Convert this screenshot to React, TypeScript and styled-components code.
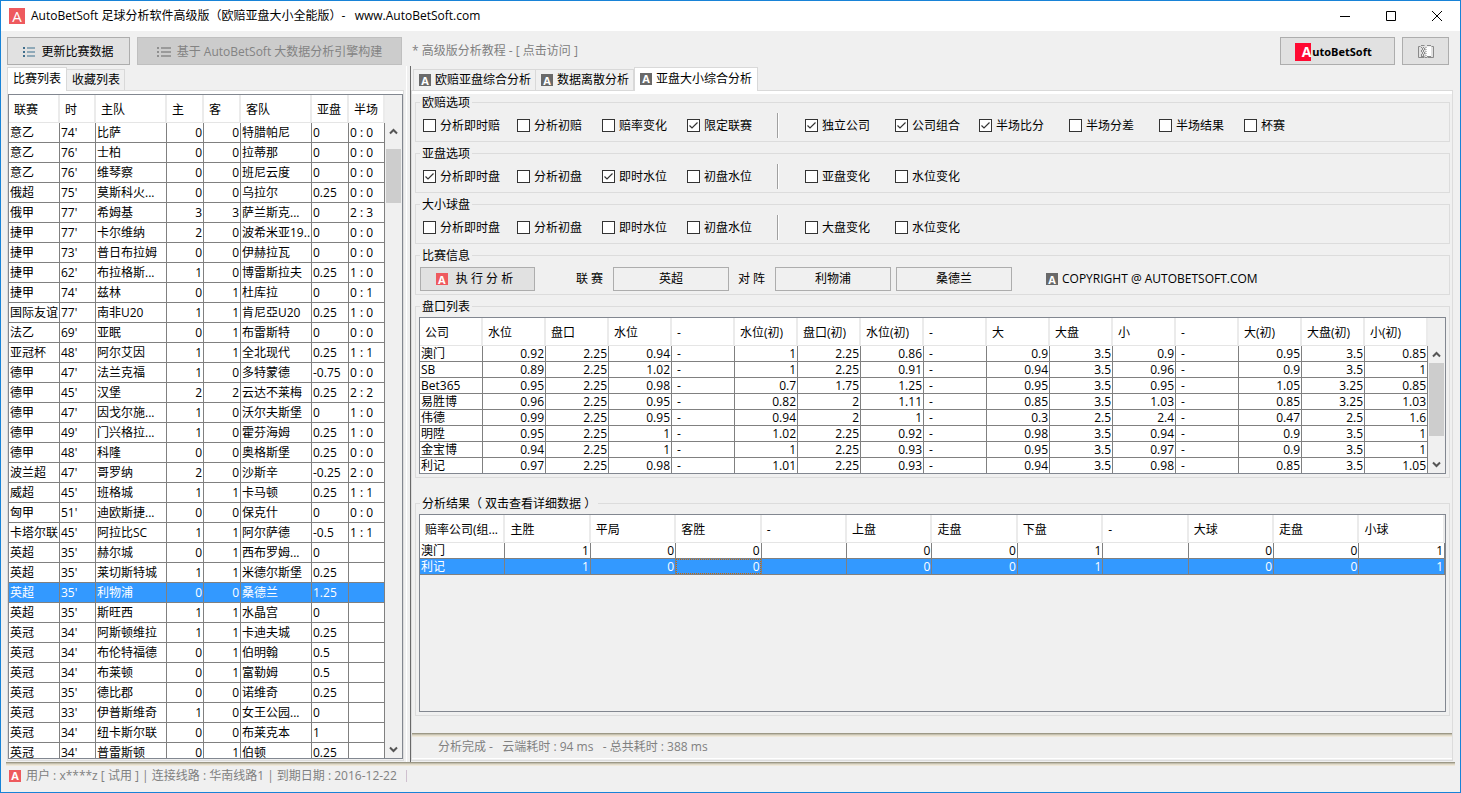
import React from 'react';
import styled, { createGlobalStyle, css } from 'styled-components';

const Global = createGlobalStyle`
  *, *::before, *::after { box-sizing: border-box; }
  body {
    margin: 0;
    background: #f0f0f0;
    color: #000;
    font: 12px/16px "Open Sans", "Noto Sans CJK SC", sans-serif;
  }
  button, input { font: inherit; color: inherit; }
`;

/* Sunken rule that fades from olive grey into the window colour. */
const fadingRule = css`
  background: linear-gradient(#9c9886 0 1px, #c4bfae 1px 2px, #e0dac9 2px 3px, #efe8da 3px 4px, transparent 4px);
`;

/* ---------- window frame ---------- */

const Window = styled.div`
  display: flex;
  flex-direction: column;
  height: 100vh;
  overflow: hidden;
  border: 1px solid #1883d7;
  background: #f0f0f0;
`;

const TitleBar = styled.header`
  display: flex;
  align-items: center;
  flex: none;
  height: 30px;
  padding-left: 8px;
  gap: 6px;
  background: #fff;
`;

const Title = styled.h1`
  flex: 1;
  margin: 0;
  font-size: 12px;
  font-weight: 400;
  white-space: pre;
`;

const WindowButtons = styled.div`
  display: flex;
`;

const WindowButton = styled.button`
  display: grid;
  place-items: center;
  width: 46px;
  height: 30px;
  padding: 0;
  border: 0;
  background: none;
`;

const Mark = styled.span<{ $size?: number; $tone?: 'red' | 'grey' }>`
  display: inline-flex;
  align-items: center;
  justify-content: center;
  flex: none;
  width: ${(p) => p.$size ?? 12}px;
  height: ${(p) => p.$size ?? 12}px;
  background: ${(p) => (p.$tone === 'grey' ? '#696969' : '#ee5a5e')};
  color: #fff;
  font-family: "Open Sans", sans-serif;
  font-size: ${(p) => (p.$size ?? 12) - 1}px;
  font-weight: ${(p) => (p.$size ? 400 : 700)};
  line-height: 1;
`;

/* ---------- toolbar ---------- */

const Toolbar = styled.div`
  display: flex;
  align-items: flex-start;
  flex: none;
  height: 35px;
  padding: 6px 11px 0 6px;
  gap: 7px;
`;

const ToolButton = styled.button<{ $width: number }>`
  display: flex;
  align-items: center;
  justify-content: center;
  flex: none;
  gap: 6px;
  width: ${(p) => p.$width}px;
  height: 28px;
  padding: 1px 0 0;
  border: 1px solid #adadad;
  background: #e1e1e1;
  white-space: nowrap;
  &:disabled {
    border-color: #bfbfbf;
    background: #ccc;
    color: #838383;
  }
`;

const Guide = styled.a`
  flex: 1;
  padding-left: 3px;
  color: #808080;
  line-height: 28px;
  text-decoration: none;
  white-space: pre;
`;

const Brand = styled.span`
  display: flex;
  align-items: center;
  padding-right: 8px;
  gap: 1px;
  font-size: 11px;
  font-weight: 700;
`;

const BrandInitial = styled.span`
  width: 16px;
  height: 18px;
  background: #ff0a32;
  color: #fff;
  font-size: 14px;
  line-height: 17px;
  text-align: right;
`;

/* ---------- panes and tabs ---------- */

const Main = styled.main`
  display: flex;
  flex: 1;
  min-height: 0;
`;

const LeftPane = styled.section`
  display: flex;
  flex-direction: column;
  flex: none;
  width: 406px;
  padding: 0 2px 1px 6px;
  border-right: 1px solid #fff;
`;

const RightPane = styled.section`
  display: flex;
  flex-direction: column;
  flex: 1;
  min-width: 0;
  margin-left: 3px;
  padding: 0 7px 1px 0;
  border-left: 1px solid #696969;
`;

const TabStrip = styled.div<{ $inset?: boolean }>`
  display: flex;
  align-items: flex-end;
  flex: none;
  height: 24px;
  padding-left: ${(p) => (p.$inset ? 2 : 0)}px;
`;

const Tab = styled.button<{ $active?: boolean }>`
  display: flex;
  align-items: center;
  gap: 4px;
  height: 21px;
  padding: 0 4px 0 5px;
  border: 1px solid #d9d9d9;
  border-width: 1px 1px 0 0;
  background: #f0f0f0;
  white-space: nowrap;
  &:first-child { border-left-width: 1px; }
  ${(p) =>
    p.$active &&
    css`
      height: 24px;
      margin-bottom: -1px;
      padding: 0 5px 2px;
      border-left-width: 1px;
      background: #fff;
      z-index: 1;
    `}
`;

const TabPanel = styled.div`
  display: flex;
  flex-direction: column;
  flex: 1;
  min-height: 0;
  padding-bottom: 1px;
  border: 1px solid #dcdcdc;
  border-top-color: #d9d9d9;
  &::before {
    content: "";
    flex: none;
    height: 3px;
    background: #fff;
  }
`;

/* ---------- group boxes ---------- */

const Groups = styled.div`
  display: flex;
  flex-direction: column;
  flex: 1;
  min-height: 0;
  gap: 3px;
  padding: 0 2px 17px 3px;
`;

const Group = styled.fieldset<{ $top: number; $fill?: boolean; $gap?: number }>`
  display: flex;
  align-items: stretch;
  flex: ${(p) => (p.$fill ? '1 1 0' : 'none')};
  min-width: 0;
  min-height: 0;
  margin: ${(p) => p.$gap ?? 0}px 0 0;
  padding: ${(p) => p.$top}px 3px 3px;
  border: 1px solid #dcdcdc;
`;

const Legend = styled.legend`
  margin-left: 1px;
  padding: 2px 2px 0;
  line-height: 14px;
  white-space: pre;
`;

const OptionGrid = styled.div`
  display: grid;
  grid-template-columns: 94px 85px 85px 90px 28px 90px 84px 90px 90px 85px auto;
  align-items: center;
  height: 25px;
  padding-left: 4px;
`;

const Divider = styled.span`
  width: 2px;
  height: 25px;
  border-left: 1px solid #a0a0a0;
  border-right: 1px solid #fff;
`;

const CheckLabel = styled.label`
  display: flex;
  align-items: center;
  gap: 4px;
  white-space: nowrap;
`;

const CheckBox = styled.span`
  display: grid;
  & > * { grid-area: 1 / 1; }
  svg { pointer-events: none; }
`;

const CheckInput = styled.input`
  appearance: none;
  width: 13px;
  height: 13px;
  margin: 0;
  border: 1px solid #333;
  background: #fff;
  & + svg { visibility: hidden; }
  &:checked + svg { visibility: visible; }
`;

const InfoButton = styled.button<{ $filled?: boolean }>`
  display: flex;
  align-items: center;
  justify-content: center;
  gap: 8px;
  width: ${(p) => (p.$filled ? 115 : 116)}px;
  height: 24px;
  padding: ${(p) => (p.$filled ? '0 6px 0 0' : '0')};
  border: 1px solid #adadad;
  background: ${(p) => (p.$filled ? '#e1e1e1' : '#f0f0f0')};
  white-space: pre;
`;

const InfoRow = styled.div`
  display: flex;
  align-items: center;
  height: 24px;
  padding-left: 1px;
`;

const InfoLabel = styled.span<{ $before: number }>`
  width: ${(p) => p.$before + 37}px;
  padding-left: ${(p) => p.$before}px;
  white-space: pre;
`;

const InfoPair = styled.div`
  display: flex;
  gap: 5px;
`;

const Copyright = styled.span`
  display: flex;
  align-items: center;
  gap: 4px;
  padding-left: 34px;
  white-space: pre;
`;

/* ---------- data grids ---------- */

const GridFrame = styled.div`
  display: flex;
  align-items: flex-start;
  flex: 1;
  min-width: 0;
  min-height: 0;
  overflow: hidden;
  border: 1px solid #828790;
`;

const OddsFrame = styled(GridFrame)`
  height: 157px;
`;

const Table = styled.table<{ $row: number; $width?: string }>`
  flex: ${(p) => (p.$width ? 'none' : '1')};
  width: ${(p) => p.$width ?? '100%'};
  min-width: 0;
  table-layout: fixed;
  border-collapse: separate;
  border-spacing: 0;
  background: #fff;
  th {
    height: 28px;
    padding: 2px 0 0 5px;
    border-right: 2px solid #ebebeb;
    border-bottom: 1px solid #e5e5e5;
    font-weight: 400;
    text-align: left;
  }
  td {
    height: ${(p) => p.$row}px;
    padding: 0 1px;
    border-right: 1px solid #808080;
    border-bottom: 1px solid #808080;
    line-height: ${(p) => p.$row - 1}px;
  }
  th, td {
    overflow: hidden;
    white-space: pre;
  }
`;

const Row = styled.tr<{ $selected?: boolean }>`
  ${(p) =>
    p.$selected &&
    css`
      background: #39f;
      color: #fff;
    `}
`;

const Cell = styled.td<{ $right?: boolean; $inset?: boolean }>`
  text-align: ${(p) => (p.$right ? 'right' : 'left')};
  ${(p) => p.$inset && 'text-indent: 4px;'}
`;

const FocusRing = styled.div`
  height: 15px;
  margin: 0 -1px;
  border: 1px dotted #c60;
  line-height: 13px;
`;

const ScrollTrack = styled.div`
  display: flex;
  flex-direction: column;
  align-self: stretch;
  align-items: center;
  flex: none;
  width: 17px;
  padding-top: 28px;
  background: #f0f0f0;
`;

const ScrollArrow = styled.button`
  display: grid;
  place-items: center;
  flex: none;
  width: 17px;
  height: 17px;
  padding: 0;
  border: 0;
  background: none;
`;

const ScrollSpace = styled.div<{ $before: number }>`
  flex: 1;
  width: 15px;
  padding-top: ${(p) => p.$before}px;
`;

const ScrollThumb = styled.div<{ $length: number }>`
  height: ${(p) => p.$length}px;
  background: #cdcdcd;
`;

/* ---------- status lines ---------- */

const ResultStatus = styled.div`
  flex: none;
  height: 26px;
  padding: 6px 26px 0;
  border-bottom: 1px solid #fff;
  color: #808080;
  white-space: pre;
  ${fadingRule}
`;

const Footer = styled.footer`
  display: flex;
  align-items: flex-start;
  flex: none;
  height: 30px;
  margin: 0 5px;
  padding: 5px 3px 0;
  gap: 5px;
  color: #808080;
  white-space: pre;
  ${fadingRule}
`;

const FooterText = styled.span`
  display: flex;
  align-items: center;
  gap: 5px;
  height: 17px;
`;

const FooterDivider = styled.span`
  width: 1px;
  height: 12px;
  margin: 3px 0 0 4px;
  background: #cfc0cf;
`;

/* ---------- small drawings ---------- */

const ListIcon = ({ muted, size = 12 }: { muted?: boolean; size?: number }) => (
  <svg width={size} height="12" viewBox={`0 0 ${size} 12`} aria-hidden="true" shapeRendering="crispEdges">
    {[1, 5, 9].map((y) => (
      <g key={y}>
        <rect x="0" y={y} width="2" height="2" fill={muted ? '#8f8f8f' : '#3f6e8c'} />
        <rect x="4" y={y} width={size - 4} height="2" fill={muted ? '#9a9a9a' : '#8fa9b8'} />
      </g>
    ))}
  </svg>
);

const BookIcon = () => (
  <svg width="16" height="14" viewBox="0 0 16 14" fill="none" stroke="#8a8a8a" aria-hidden="true">
    <path d="M8 2.5L9 1.5H13V11.5H8Z" fill="#fff" stroke="none" />
    <path d="M2.5 1.5H0.5V12.5H6.5M13.5 1.5H15.5V12.5H9.5" />
    <path d="M3 0.5H6.5M9 0.5H13M3 11.5H6.5M9 11.5H13M7 12.5H9" />
    <path d="M3 2.5H7M4 4.5H8M3 6.5H7M4 8.5H8M3 10.5H7M4 3.5H8M3 5.5H7M4 7.5H8M3 9.5H7M8 2V12" strokeDasharray="1 1" />
  </svg>
);

const Chevron = ({ down }: { down?: boolean }) => (
  <svg width="9" height="7" viewBox="0 0 9 7" fill="none" stroke="#555" strokeWidth="2" aria-hidden="true">
    <path d={down ? 'M1 1.5L4.5 5L8 1.5' : 'M1 5.5L4.5 2L8 5.5'} />
  </svg>
);

const Scrollbar = ({ before, length }: { before: number; length: number }) => (
  <ScrollTrack>
    <ScrollArrow type="button" aria-label="向上滚动"><Chevron /></ScrollArrow>
    <ScrollSpace $before={before}><ScrollThumb $length={length} /></ScrollSpace>
    <ScrollArrow type="button" aria-label="向下滚动"><Chevron down /></ScrollArrow>
  </ScrollTrack>
);

/* ---------- data ---------- */

const matchColumns: [string, number][] = [
  ['联赛', 51], ['时', 36], ['主队', 71], ['主', 37], ['客', 37], ['客队', 71], ['亚盘', 37], ['半场', 36],
];

const matches = `意乙|74'|比萨|0|0|特腊帕尼|0|0 : 0
意乙|76'|士柏|0|0|拉蒂那|0|0 : 0
意乙|76'|维琴察|0|0|班尼云度|0|0 : 0
俄超|75'|莫斯科火...|0|0|乌拉尔|0.25|0 : 0
俄甲|77'|希姆基|3|3|萨兰斯克...|0|2 : 3
捷甲|77'|卡尔维纳|2|0|波希米亚19..|0|0 : 0
捷甲|73'|普日布拉姆|0|0|伊赫拉瓦|0|0 : 0
捷甲|62'|布拉格斯...|1|0|博雷斯拉夫|0.25|1 : 0
捷甲|74'|兹林|0|1|杜库拉|0|0 : 1
国际友谊|77'|南非U20|1|1|肯尼亞U20|0.25|1 : 0
法乙|69'|亚眠|0|1|布雷斯特|0|0 : 0
亚冠杯|48'|阿尔艾因|1|1|全北现代|0.25|1 : 1
德甲|47'|法兰克福|1|0|多特蒙德|-0.75|0 : 0
德甲|45'|汉堡|2|2|云达不莱梅|0.25|2 : 2
德甲|47'|因戈尔施...|1|0|沃尔夫斯堡|0|1 : 0
德甲|49'|门兴格拉...|1|0|霍芬海姆|0.25|1 : 0
德甲|48'|科隆|0|0|奥格斯堡|0.25|0 : 0
波兰超|47'|哥罗纳|2|0|沙斯辛|-0.25|2 : 0
威超|45'|班格城|1|1|卡马顿|0.25|1 : 1
匈甲|51'|迪欧斯捷...|0|0|保克什|0|0 : 0
卡塔尔联|45'|阿拉比SC|1|1|阿尔萨德|-0.5|1 : 1
英超|35'|赫尔城|0|1|西布罗姆...|0|
英超|35'|莱切斯特城|1|1|米德尔斯堡|0.25|
英超|35'|利物浦|0|0|桑德兰|1.25|
英超|35'|斯旺西|1|1|水晶宫|0|
英冠|34'|阿斯顿维拉|1|1|卡迪夫城|0.25|
英冠|34'|布伦特福德|0|1|伯明翰|0.5|
英冠|34'|布莱顿|0|1|富勒姆|0.5|
英冠|35'|德比郡|0|0|诺维奇|0.25|
英冠|33'|伊普斯维奇|1|0|女王公园...|0|
英冠|34'|纽卡斯尔联|0|0|布莱克本|1|
英冠|34'|普雷斯顿|0|1|伯顿|0.25|`.split('\n').map((line) => line.split('|'));

const oddsColumns = [
  '公司', '水位', '盘口', '水位', '-', '水位(初)', '盘口(初)', '水位(初)', '-',
  '大', '大盘', '小', '-', '大(初)', '大盘(初)', '小(初)',
];

const odds = `澳门|0.92|2.25|0.94|-|1|2.25|0.86|-|0.9|3.5|0.9|-|0.95|3.5|0.85
SB|0.89|2.25|1.02|-|1|2.25|0.91|-|0.94|3.5|0.96|-|0.9|3.5|1
Bet365|0.95|2.25|0.98|-|0.7|1.75|1.25|-|0.95|3.5|0.95|-|1.05|3.25|0.85
易胜博|0.96|2.25|0.95|-|0.82|2|1.11|-|0.85|3.5|1.03|-|0.85|3.25|1.03
伟德|0.99|2.25|0.95|-|0.94|2|1|-|0.3|2.5|2.4|-|0.47|2.5|1.6
明陞|0.95|2.25|1|-|1.02|2.25|0.92|-|0.98|3.5|0.94|-|0.9|3.5|1
金宝博|0.94|2.25|1|-|1|2.25|0.93|-|0.95|3.5|0.97|-|0.9|3.5|1
利记|0.97|2.25|0.98|-|1.01|2.25|0.93|-|0.94|3.5|0.98|-|0.85|3.5|1.05`
  .split('\n').map((line) => line.split('|'));

const resultColumns = [
  '赔率公司(组...', '主胜', '平局', '客胜', '-', '上盘', '走盘', '下盘', '-', '大球', '走盘', '小球',
];

const results = [
  ['澳门', '1', '0', '0', '', '0', '0', '1', '', '0', '0', '1'],
  ['利记', '1', '0', '0', '', '0', '0', '1', '', '0', '0', '1'],
];

/* A null entry is the divider; a leading "+" marks a ticked option. */
const optionGroups: { title: string; options: (string | null)[] }[] = [
  {
    title: '欧赔选项',
    options: ['分析即时赔', '分析初赔', '赔率变化', '+限定联赛', null, '+独立公司', '+公司组合', '+半场比分', '半场分差', '半场结果', '杯赛'],
  },
  {
    title: '亚盘选项',
    options: ['+分析即时盘', '分析初盘', '+即时水位', '初盘水位', null, '亚盘变化', '水位变化'],
  },
  {
    title: '大小球盘',
    options: ['分析即时盘', '分析初盘', '即时水位', '初盘水位', null, '大盘变化', '水位变化'],
  },
];

const Option = ({ text }: { text: string }) => (
  <CheckLabel>
    <CheckBox>
      <CheckInput type="checkbox" defaultChecked={text.startsWith('+')} />
      <svg width="13" height="13" viewBox="0 0 13 13" fill="none" stroke="#333" strokeWidth="1.2" aria-hidden="true">
        <path d="M2.5 6.5L5 9L10.5 3.5" />
      </svg>
    </CheckBox>
    {text.replace('+', '')}
  </CheckLabel>
);

export default function App() {
  return (
    <>
      <Global />
      <Window>
        <TitleBar>
          <Mark $size={16}>A</Mark>
          <Title>{'AutoBetSoft 足球分析软件高级版（欧赔亚盘大小全能版）-   www.AutoBetSoft.com'}</Title>
          <WindowButtons>
            <WindowButton type="button" aria-label="最小化">
              <svg width="10" height="10" viewBox="0 0 10 10" stroke="#000"><path d="M0 5.5H10" /></svg>
            </WindowButton>
            <WindowButton type="button" aria-label="最大化">
              <svg width="10" height="10" viewBox="0 0 10 10" stroke="#000" fill="none"><path d="M0.5 0.5H9.5V9.5H0.5Z" /></svg>
            </WindowButton>
            <WindowButton type="button" aria-label="关闭">
              <svg width="10" height="10" viewBox="0 0 10 10" stroke="#000"><path d="M0 0L10 10M10 0L0 10" /></svg>
            </WindowButton>
          </WindowButtons>
        </TitleBar>

        <Toolbar>
          <ToolButton type="button" $width={123}><ListIcon />更新比赛数据</ToolButton>
          <ToolButton type="button" $width={265} disabled>
            <ListIcon muted size={14} />基于 AutoBetSoft 大数据分析引擎构建
          </ToolButton>
          <Guide href="#guide">{'* 高级版分析教程 - [ 点击访问 ]'}</Guide>
          <ToolButton type="button" $width={115}>
            <Brand><BrandInitial>A</BrandInitial>utoBetSoft</Brand>
          </ToolButton>
          <ToolButton type="button" $width={47} aria-label="帮助"><BookIcon /></ToolButton>
        </Toolbar>

        <Main>
          <LeftPane>
            <TabStrip role="tablist">
              <Tab type="button" role="tab" aria-selected $active>比赛列表</Tab>
              <Tab type="button" role="tab">收藏列表</Tab>
            </TabStrip>
            <TabPanel>
              <GridFrame>
                <Table $row={20} $width="376px">
                  <colgroup>
                    {matchColumns.map(([name, width]) => <col key={name} width={width} />)}
                  </colgroup>
                  <thead>
                    <tr>{matchColumns.map(([name]) => <th key={name}>{name}</th>)}</tr>
                  </thead>
                  <tbody>
                    {matches.map((match) => (
                      <Row key={match[2]} $selected={match[2] === '利物浦'}>
                        {match.map((value, i) => (
                          <Cell key={i} $right={i === 3 || i === 4}>{value}</Cell>
                        ))}
                      </Row>
                    ))}
                  </tbody>
                </Table>
                <Scrollbar before={9} length={54} />
              </GridFrame>
            </TabPanel>
          </LeftPane>

          <RightPane>
            <TabStrip role="tablist" $inset>
              <Tab type="button" role="tab"><Mark $tone="grey">A</Mark>欧赔亚盘综合分析</Tab>
              <Tab type="button" role="tab"><Mark $tone="grey">A</Mark>数据离散分析</Tab>
              <Tab type="button" role="tab" aria-selected $active><Mark $tone="grey">A</Mark>亚盘大小综合分析</Tab>
            </TabStrip>
            <TabPanel>
              <Groups>
                {optionGroups.map(({ title, options }) => (
                  <Group key={title} $top={3}>
                    <Legend>{title}</Legend>
                    <OptionGrid>
                      {options.map((text, i) => (text ? <Option key={i} text={text} /> : <Divider key={i} />))}
                    </OptionGrid>
                  </Group>
                ))}

                <Group $top={4}>
                  <Legend>比赛信息</Legend>
                  <InfoRow>
                    <InfoButton type="button" $filled><Mark>A</Mark>执 行 分 析</InfoButton>
                    <InfoLabel $before={41}>联 赛</InfoLabel>
                    <InfoButton type="button">英超</InfoButton>
                    <InfoLabel $before={9}>对 阵</InfoLabel>
                    <InfoPair>
                      <InfoButton type="button">利物浦</InfoButton>
                      <InfoButton type="button">桑德兰</InfoButton>
                    </InfoPair>
                    <Copyright><Mark $tone="grey">A</Mark>COPYRIGHT @ AUTOBETSOFT.COM</Copyright>
                  </InfoRow>
                </Group>

                <Group $top={3}>
                  <Legend>盘口列表</Legend>
                  <OddsFrame>
                    <Table $row={16}>
                      <thead>
                        <tr>{oddsColumns.map((name, i) => <th key={i}>{name}</th>)}</tr>
                      </thead>
                      <tbody>
                        {odds.map((line) => (
                          <Row key={line[0]}>
                            {line.map((value, i) => (
                              <Cell key={i} $right={i > 0 && value !== '-'} $inset={value === '-'}>{value}</Cell>
                            ))}
                          </Row>
                        ))}
                      </tbody>
                    </Table>
                    <Scrollbar before={0} length={73} />
                  </OddsFrame>
                </Group>

                <Group $top={3} $fill $gap={14}>
                  <Legend>{'分析结果（ 双击查看详细数据 ）'}</Legend>
                  <GridFrame>
                    <Table $row={16}>
                      <thead>
                        <tr>{resultColumns.map((name, i) => <th key={i}>{name}</th>)}</tr>
                      </thead>
                      <tbody>
                        {results.map((line, r) => (
                          <Row key={line[0]} $selected={r === 1}>
                            {line.map((value, i) => (
                              <Cell key={i} $right={i > 0}>
                                {r === 1 && i === 3 ? <FocusRing>{value}</FocusRing> : value}
                              </Cell>
                            ))}
                          </Row>
                        ))}
                      </tbody>
                    </Table>
                  </GridFrame>
                </Group>
              </Groups>
              <ResultStatus>{'分析完成 -   云端耗时 : 94 ms   - 总共耗时 : 388 ms'}</ResultStatus>
            </TabPanel>
          </RightPane>
        </Main>

        <Footer>
          <FooterText>
            <Mark>A</Mark>
            {'用户 : x****z [ 试用 ] | 连接线路 : 华南线路1 | 到期日期 : 2016-12-22'}
          </FooterText>
          <FooterDivider />
        </Footer>
      </Window>
    </>
  );
}
